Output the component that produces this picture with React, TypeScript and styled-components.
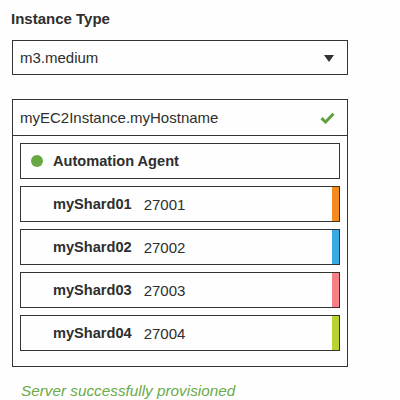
import styled, { createGlobalStyle } from "styled-components";

const GlobalStyle = createGlobalStyle`
  html, body {
    margin: 0;
    padding: 0;
    background: #fdfefd;
  }
  body {
    font-family: "Liberation Sans", Arial, sans-serif;
    color: #2e2e2e;
  }
`;

const Page = styled.div`
  width: 400px;
  height: 400px;
  box-sizing: border-box;
  padding: 10px 0 0 12px;
  display: flex;
  flex-direction: column;
`;

const Title = styled.h3`
  margin: 0 0 0 -1px;
  font-size: 15px;
  line-height: 17px;
  font-weight: bold;
`;

const Select = styled.div`
  margin-top: 13px;
  width: 336px;
  height: 36px;
  box-sizing: border-box;
  border: 1px solid #333;
  display: flex;
  align-items: center;
  justify-content: space-between;
  padding: 0 13px 0 7px;
  font-size: 15px;
`;

const Caret = styled.span`
  width: 0;
  height: 0;
  border-left: 5.5px solid transparent;
  border-right: 5.5px solid transparent;
  border-top: 7px solid #333;
  margin-top: 1px;
`;

const HostBox = styled.div`
  margin-top: 24px;
  width: 336px;
  box-sizing: border-box;
  border: 1px solid #333;
`;

const HostHeader = styled.div`
  height: 36px;
  box-sizing: border-box;
  border-bottom: 1px solid #333;
  display: flex;
  align-items: center;
  justify-content: space-between;
  padding: 0 12px 0 7px;
  font-size: 15px;
`;

const ProcessList = styled.div`
  display: flex;
  flex-direction: column;
  gap: 7px;
  padding: 7px 7px 15px 7px;
`;

const ProcessRow = styled.div<{ $accent?: string }>`
  position: relative;
  height: 36px;
  box-sizing: border-box;
  border: 1px solid #333;
  display: flex;
  align-items: center;
  padding-left: 32px;
  font-size: 14.6px;
  overflow: hidden;

  &::after {
    content: "";
    position: absolute;
    top: 0;
    right: 0;
    bottom: 0;
    width: 7px;
    background: ${(p) => p.$accent ?? "transparent"};
  }
`;

const AgentRow = styled(ProcessRow)`
  padding-left: 10px;
  gap: 10px;
`;

const StatusDot = styled.span`
  width: 12px;
  height: 12px;
  border-radius: 50%;
  background: #67a844;
`;

const Name = styled.span`
  font-weight: bold;
`;

const Port = styled.span`
  margin-left: 12px;
  font-size: 15px;
`;

const Status = styled.p`
  margin: 15px 0 0 9px;
  font-size: 15.3px;
  font-style: italic;
  color: #6aaa4a;
`;

const shards = [
  { name: "myShard01", port: 27001, color: "#f58a1f" },
  { name: "myShard02", port: 27002, color: "#3aabe2" },
  { name: "myShard03", port: 27003, color: "#f58086" },
  { name: "myShard04", port: 27004, color: "#b6d334" },
];

const Check = () => (
  <svg width="15" height="12" viewBox="0 0 15 12">
    <path
      d="M1.5 6.2 L5.5 10 L13.5 1.8"
      fill="none"
      stroke="#5fa13f"
      strokeWidth="3"
      strokeLinejoin="miter"
    />
  </svg>
);

const App = () => {
  return (
    <Page>
      <GlobalStyle />
      <Title>Instance Type</Title>
      <Select>
        <span>m3.medium</span>
        <Caret />
      </Select>
      <HostBox>
        <HostHeader>
          <span>myEC2Instance.myHostname</span>
          <Check />
        </HostHeader>
        <ProcessList>
          <AgentRow>
            <StatusDot />
            <Name>Automation Agent</Name>
          </AgentRow>
          {shards.map((shard) => (
            <ProcessRow key={shard.name} $accent={shard.color}>
              <Name>{shard.name}</Name>
              <Port>{shard.port}</Port>
            </ProcessRow>
          ))}
        </ProcessList>
      </HostBox>
      <Status>Server successfully provisioned</Status>
    </Page>
  );
};

export default App;
